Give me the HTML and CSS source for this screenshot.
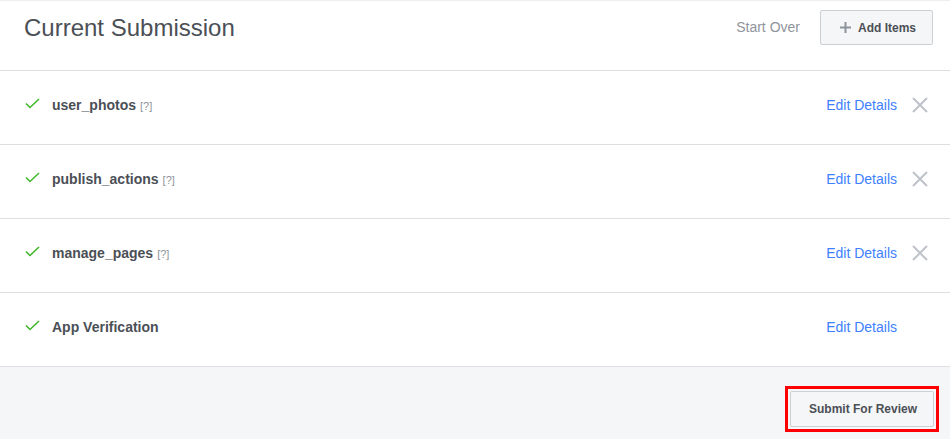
FILE: index.html
```html
<html>

<head>
  <title>Current Submission</title>
  <meta charset="UTF-8" />
  <link rel="stylesheet" href="styles.css">
</head>

<body>

  <div class="panel">

    <div class="panel_header">
      <h2 class="title">Current Submission</h2>
      <a class="start_over">Start Over</a>
      <button class="btn">
        <svg class="plus" width="11" height="11" viewBox="0 0 11 11"><path d="M5.5 0v11M0 5.5h11" stroke="#8d949e" stroke-width="2"/></svg>
        Add Items
      </button>
    </div>

    <div class="item">
      <svg class="check" width="15" height="11" viewBox="0 0 15 11"><path d="M1 5.5l4 4L14 1" fill="none" stroke="#42b72a" stroke-width="1.6"/></svg>
      <span class="item_name">user_photos</span><span class="help">[?]</span>
      <a class="edit">Edit Details</a>
      <span class="remove"><svg width="16" height="16" viewBox="0 0 16 16"><path d="M1 1l14 14M15 1L1 15" stroke="#bec2c9" stroke-width="2"/></svg></span>
    </div>

    <div class="item">
      <svg class="check" width="15" height="11" viewBox="0 0 15 11"><path d="M1 5.5l4 4L14 1" fill="none" stroke="#42b72a" stroke-width="1.6"/></svg>
      <span class="item_name">publish_actions</span><span class="help">[?]</span>
      <a class="edit">Edit Details</a>
      <span class="remove"><svg width="16" height="16" viewBox="0 0 16 16"><path d="M1 1l14 14M15 1L1 15" stroke="#bec2c9" stroke-width="2"/></svg></span>
    </div>

    <div class="item">
      <svg class="check" width="15" height="11" viewBox="0 0 15 11"><path d="M1 5.5l4 4L14 1" fill="none" stroke="#42b72a" stroke-width="1.6"/></svg>
      <span class="item_name">manage_pages</span><span class="help">[?]</span>
      <a class="edit">Edit Details</a>
      <span class="remove"><svg width="16" height="16" viewBox="0 0 16 16"><path d="M1 1l14 14M15 1L1 15" stroke="#bec2c9" stroke-width="2"/></svg></span>
    </div>

    <div class="item">
      <svg class="check" width="15" height="11" viewBox="0 0 15 11"><path d="M1 5.5l4 4L14 1" fill="none" stroke="#42b72a" stroke-width="1.6"/></svg>
      <span class="item_name">App Verification</span>
      <a class="edit">Edit Details</a>
      <span class="remove"></span>
    </div>

    <div class="panel_footer">
      <span class="highlight">
        <button class="btn submit">Submit For Review</button>
      </span>
    </div>

  </div>

</body>

</html>
```

FILE: styles.css
```css
  * {
    font-family: "Liberation Sans", Arial, sans-serif;
    box-sizing: border-box;
  }

  body {
    margin: 0;
    background-color: #ffffff;
    color: #4b4f56;
  }

  .panel {
    border-top: 1px solid #eceef1;
  }

  .panel_header {
    display: flex;
    align-items: flex-start;
    height: 70px;
    padding: 9px 17px 0 24px;
    border-bottom: 1px solid #dddfe2;
  }

  .title {
    flex: 1;
    margin: 0;
    font-size: 24px;
    font-weight: normal;
    line-height: 35px;
    color: #4b4f56;
  }

  .start_over {
    font-size: 14px;
    line-height: 35px;
    color: #90949c;
    margin-right: 20px;
  }

  .btn {
    display: flex;
    align-items: center;
    height: 35px;
    padding: 0 16px 0 19px;
    background-color: #f5f6f7;
    border: 1px solid #ccd0d5;
    border-radius: 2px;
    font-size: 12px;
    font-weight: bold;
    color: #4b4f56;
  }

  .plus {
    margin-right: 7px;
  }

  .item {
    display: flex;
    align-items: baseline;
    height: 74px;
    padding: 25px 22px 0 25px;
    border-bottom: 1px solid #dddfe2;
    font-size: 14px;
    line-height: 18px;
  }

  .check {
    align-self: flex-start;
    margin-top: 2px;
    margin-right: 12px;
  }

  .item_name {
    font-weight: bold;
    color: #4b4f56;
  }

  .help {
    margin-left: 4px;
    font-size: 11px;
    color: #90949c;
  }

  .edit {
    margin-left: auto;
    color: #4080ff;
  }

  .remove {
    align-self: flex-start;
    width: 16px;
    height: 16px;
    margin-top: 1px;
    margin-left: 15px;
  }

  .panel_footer {
    display: flex;
    justify-content: flex-end;
    align-items: flex-start;
    height: 73px;
    padding: 19px 11px 0 0;
    background-color: #f5f6f7;
  }

  .highlight {
    display: block;
    padding: 2px;
    border: 3px solid #ff0000;
  }

  .submit {
    height: 36px;
    padding: 0 16px 0 18px;
  }
```
